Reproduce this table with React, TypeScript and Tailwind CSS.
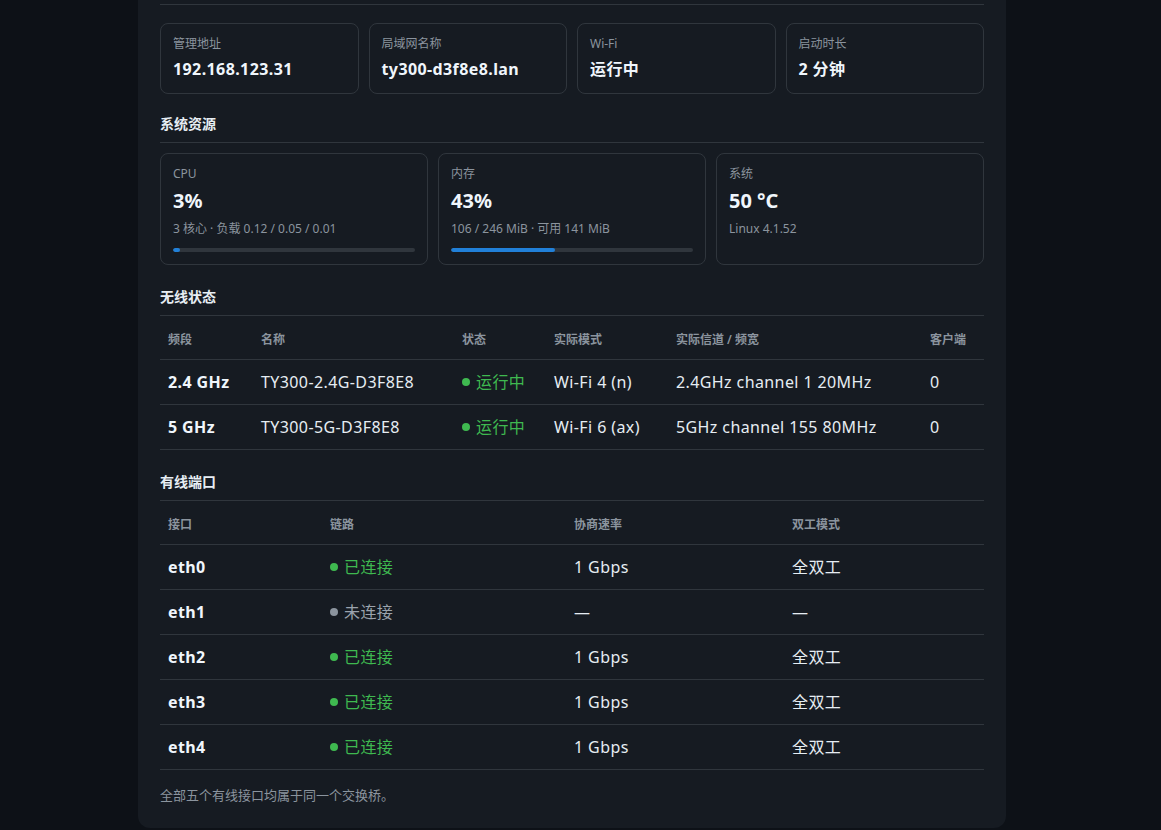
import React from "react";

const font = { fontFamily: '"Noto Sans", "Noto Sans CJK SC", sans-serif' };

const info = [
  { label: "管理地址", value: "192.168.123.31" },
  { label: "局域网名称", value: "ty300-d3f8e8.lan" },
  { label: "Wi-Fi", value: "运行中" },
  { label: "启动时长", value: "2 分钟" },
];

const resources = [
  { label: "CPU", value: "3%", sub: "3 核心 · 负载 0.12 / 0.05 / 0.01", bar: 3 },
  { label: "内存", value: "43%", sub: "106 / 246 MiB · 可用 141 MiB", bar: 43 },
  { label: "系统", value: "50 °C", sub: "Linux 4.1.52", bar: null as number | null },
];

const radios = [
  { band: "2.4 GHz", ssid: "TY300-2.4G-D3F8E8", mode: "Wi-Fi 4 (n)", chan: "2.4GHz channel 1 20MHz", clients: "0" },
  { band: "5 GHz", ssid: "TY300-5G-D3F8E8", mode: "Wi-Fi 6 (ax)", chan: "5GHz channel 155 80MHz", clients: "0" },
];

const ports = [
  { name: "eth0", up: true, speed: "1 Gbps", duplex: "全双工" },
  { name: "eth1", up: false, speed: "—", duplex: "—" },
  { name: "eth2", up: true, speed: "1 Gbps", duplex: "全双工" },
  { name: "eth3", up: true, speed: "1 Gbps", duplex: "全双工" },
  { name: "eth4", up: true, speed: "1 Gbps", duplex: "全双工" },
];

function SectionTitle({ children, className = "" }: { children: React.ReactNode; className?: string }) {
  return (
    <h2 className={`text-[14px] leading-5 font-bold text-[#e6edf3] pb-2 border-b border-[#30363d] ${className}`}>
      {children}
    </h2>
  );
}

function Status({ ok, text }: { ok: boolean; text: string }) {
  return (
    <span className={`flex items-center gap-[6px] ${ok ? "text-[#3fb950]" : "text-[#9ba3ad]"}`}>
      <span className={`w-2 h-2 rounded-full ${ok ? "bg-[#3fb950]" : "bg-[#8b949e]"}`} />
      {text}
    </span>
  );
}

export default function App() {
  return (
    <div className="min-h-screen bg-[#0d1117]" style={font}>
      <div className="ml-[138px] w-[868px] bg-[#161b22] rounded-b-xl px-[22px] pb-[23px]">
        {/* header remnant */}
        <div className="h-[5px] border-b border-[#30363d]" />

        {/* Overview cards */}
        <div className="grid grid-cols-4 gap-[10px] mt-[18px]">
          {info.map((c) => (
            <div key={c.label} className="border border-[#30363d] rounded-lg px-3 pt-[11px] pb-[12px]">
              <div className="text-xs leading-[18px] text-[#8b949e]">{c.label}</div>
              <div className="mt-1 text-base leading-6 tracking-[0.4px] font-bold text-[#f0f6fc]">{c.value}</div>
            </div>
          ))}
        </div>

        {/* System resources */}
        <SectionTitle className="mt-5">系统资源</SectionTitle>
        <div className="grid grid-cols-3 gap-[10px] mt-[10px]">
          {resources.map((r) => (
            <div key={r.label} className="border border-[#30363d] rounded-lg px-3 pt-[11px] pb-3">
              <div className="text-xs leading-[18px] text-[#8b949e]">{r.label}</div>
              <div className="mt-1 text-xl leading-7 font-bold text-[#f0f6fc]">{r.value}</div>
              <div className="mt-[5px] text-xs leading-[18px] text-[#8b949e]">{r.sub}</div>
              {r.bar !== null && (
                <div className="mt-[10px] h-1 rounded-full bg-[#30363d] overflow-hidden">
                  <div className="h-full rounded-full bg-[#2180d8]" style={{ width: `${r.bar}%` }} />
                </div>
              )}
            </div>
          ))}
        </div>

        {/* Wireless */}
        <SectionTitle className="mt-[22px]">无线状态</SectionTitle>
        <div className="grid grid-cols-[93px_201px_92px_122px_254px_1fr] h-[44px] pt-1 items-center border-b border-[#30363d] px-2 text-xs font-semibold text-[#8b949e]">
          <div>频段</div>
          <div>名称</div>
          <div>状态</div>
          <div>实际模式</div>
          <div>实际信道 / 频宽</div>
          <div>客户端</div>
        </div>
        {radios.map((r) => (
          <div
            key={r.band}
            className="grid grid-cols-[93px_201px_92px_122px_254px_1fr] h-[45px] items-center border-b border-[#30363d] px-2 text-base tracking-[0.4px] text-[#e6edf3]"
          >
            <div className="font-bold text-[#f0f6fc]">{r.band}</div>
            <div>{r.ssid}</div>
            <Status ok text="运行中" />
            <div>{r.mode}</div>
            <div>{r.chan}</div>
            <div>{r.clients}</div>
          </div>
        ))}

        {/* Wired */}
        <SectionTitle className="mt-[22px]">有线端口</SectionTitle>
        <div className="grid grid-cols-[162px_244px_218px_1fr] h-[44px] pt-1 items-center border-b border-[#30363d] px-2 text-xs font-semibold text-[#8b949e]">
          <div>接口</div>
          <div>链路</div>
          <div>协商速率</div>
          <div>双工模式</div>
        </div>
        {ports.map((p) => (
          <div
            key={p.name}
            className="grid grid-cols-[162px_244px_218px_1fr] h-[45px] items-center border-b border-[#30363d] px-2 text-base tracking-[0.4px] text-[#e6edf3]"
          >
            <div className="font-bold text-[#f0f6fc]">{p.name}</div>
            <Status ok={p.up} text={p.up ? "已连接" : "未连接"} />
            <div>{p.speed}</div>
            <div>{p.duplex}</div>
          </div>
        ))}

        <p className="mt-[15px] text-[13px] leading-5 text-[#8b949e]">全部五个有线接口均属于同一个交换桥。</p>
      </div>
    </div>
  );
}
